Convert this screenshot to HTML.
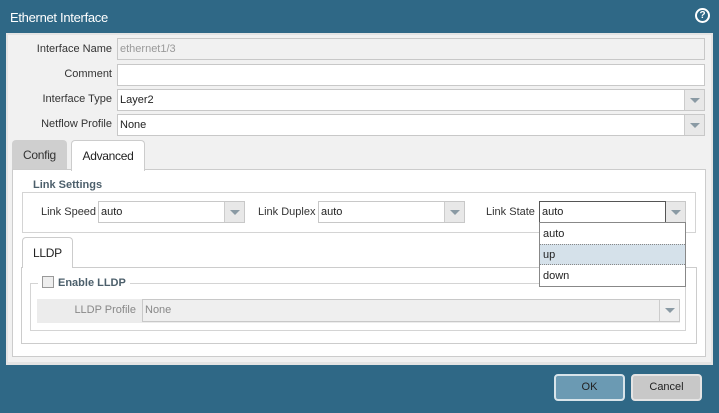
<!DOCTYPE html>
<html><head><style>
*{box-sizing:border-box;margin:0;padding:0}
body{width:719px;height:413px;background:#2f6886;font-family:"Liberation Sans",sans-serif;font-size:11px;color:#222;position:relative;overflow:hidden}
.a{position:absolute}
.lbl{position:absolute;text-align:right;color:#333}
.inp{position:absolute;background:#fff;border:1px solid #c8c8c8;padding:3px 2px;height:22px;line-height:14px}
.arr{position:absolute;top:0;right:0;width:20px;height:100%;background:#e8e8e8;border-left:1px solid #ccc}
.arr:after{content:"";position:absolute;left:5px;top:8px;border-left:5px solid transparent;border-right:5px solid transparent;border-top:5px solid #8a9aa4}
</style></head><body>
<div class="a" style="left:10px;top:10px;color:#fff;font-size:13px;letter-spacing:-0.3px">Ethernet Interface</div>
<div class="a" style="left:695px;top:8px;width:15px;height:15px;border:2px solid #fff;border-radius:50%;color:#fff;font-size:10px;font-weight:bold;text-align:center;line-height:11px">?</div>
<div class="a" style="left:6px;top:33px;width:707px;height:332px;background:#e4e4e4"></div>
<div class="a" style="left:8px;top:35px;width:703px;height:327px;background:#f1f1f1"></div>
<div class="lbl" style="left:10px;width:102px;top:43px">Interface Name</div>
<div class="inp" style="left:117px;top:38px;width:588px;background:#f1f1f1;color:#999">ethernet1/3</div>
<div class="lbl" style="left:10px;width:102px;top:68px">Comment</div>
<div class="inp" style="left:117px;top:64px;width:588px"></div>
<div class="lbl" style="left:10px;width:102px;top:93px">Interface Type</div>
<div class="inp" style="left:117px;top:89px;width:588px">Layer2<div class="arr"></div></div>
<div class="lbl" style="left:10px;width:102px;top:118px">Netflow Profile</div>
<div class="inp" style="left:117px;top:114px;width:588px">None<div class="arr"></div></div>
<div class="a" style="left:12px;top:140px;width:55px;height:30px;background:#cfcfcf;border-radius:4px 4px 0 0;font-size:12px;text-align:center;line-height:30px;color:#333;letter-spacing:-0.3px">Config</div>
<div class="a" style="left:12px;top:169px;width:694px;height:188px;background:#fff;border:1px solid #ccc"></div>
<div class="a" style="left:71px;top:140px;width:74px;height:31px;background:#fff;border:1px solid #ccc;border-bottom:none;border-radius:4px 4px 0 0;font-size:12px;text-align:center;line-height:30px;color:#222;letter-spacing:-0.3px">Advanced</div>
<div class="a" style="left:22px;top:192px;width:674px;height:41px;border:1px solid #d4d4d4"></div>
<div class="a" style="left:29px;top:179px;background:#fff;padding:0 4px;font-weight:bold;color:#4c5f6b">Link Settings</div>
<div class="lbl" style="left:41px;top:206px">Link Speed</div>
<div class="inp" style="left:98px;top:201px;width:147px">auto<div class="arr"></div></div>
<div class="lbl" style="left:258px;top:206px">Link Duplex</div>
<div class="inp" style="left:318px;top:201px;width:147px">auto<div class="arr"></div></div>
<div class="lbl" style="left:486px;top:206px">Link State</div>
<div class="inp" style="left:539px;top:201px;width:147px;border-color:#c8c8c8">auto<div class="arr"></div></div>
<div class="a" style="left:539px;top:201px;width:127px;height:22px;border:1px solid #555"></div>
<div class="a" style="left:21px;top:267px;width:676px;height:77px;border:1px solid #ccc"></div>
<div class="a" style="left:22px;top:237px;width:51px;height:31px;background:#fff;border:1px solid #ccc;border-bottom:none;border-radius:4px 4px 0 0;font-size:12px;line-height:31px;padding-left:10px;color:#222;letter-spacing:-0.3px">LLDP</div>
<div class="a" style="left:30px;top:283px;width:656px;height:48px;border:1px solid #d4d4d4"></div>
<div class="a" style="left:38px;top:277px;background:#fff;padding:0 4px;font-weight:bold;color:#4c5f6b;padding-left:20px">Enable LLDP</div>
<div class="a" style="left:42px;top:276px;width:12px;height:12px;border:1px solid #999;background:#eee"></div>
<div class="a" style="left:37px;top:299px;width:643px;height:24px;background:#ececec"></div>
<div class="lbl" style="left:40px;width:96px;top:304px;color:#888">LLDP Profile</div>
<div class="inp" style="left:142px;top:299px;width:538px;height:23px;background:#efefef;color:#888">None<div class="arr" style="background:#efefef"></div></div>
<div class="a" style="left:539px;top:222px;width:147px;height:65px;background:#fff;border:1px solid #888"></div>
<div class="a" style="left:543px;top:228px">auto</div>
<div class="a" style="left:540px;top:244px;width:145px;height:21px;background:#d5e1ea;border-top:1px dotted #888;border-bottom:1px dotted #888"></div>
<div class="a" style="left:543px;top:249px">up</div>
<div class="a" style="left:543px;top:270px">down</div>
<div class="a" style="left:554px;top:374px;width:71px;height:27px;background:#6b9ab3;border:2px solid #d8e4ea;border-radius:4px;text-align:center;line-height:23px;color:#222">OK</div>
<div class="a" style="left:631px;top:374px;width:71px;height:27px;background:#c8c8c8;border:2px solid #e4e4e4;border-radius:4px;text-align:center;line-height:23px;color:#222">Cancel</div>
</body></html>
